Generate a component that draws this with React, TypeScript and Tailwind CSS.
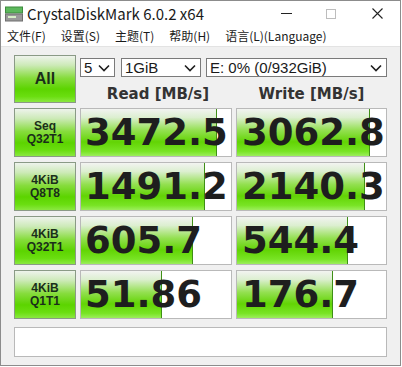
import React from 'react';

const rows = [
  { l1: 'Seq', l2: 'Q32T1', read: '3472.5', rp: 90.5, write: '3062.8', wp: 89 },
  { l1: '4KiB', l2: 'Q8T8', read: '1491.2', rp: 82.7, write: '2140.3', wp: 86 },
  { l1: '4KiB', l2: 'Q32T1', read: '605.7', rp: 74.7, write: '544.4', wp: 74.5 },
  { l1: '4KiB', l2: 'Q1T1', read: '51.86', rp: 54, write: '176.7', wp: 64.4 },
];

const menus = ['文件(F)', '设置(S)', '主题(T)', '帮助(H)', '语言(L)(Language)'];

function Chevron() {
  return (
    <svg width="12" height="8" viewBox="0 0 12 8" className="shrink-0">
      <polyline points="1,1.5 6,6.5 11,1.5" fill="none" stroke="#1f1f1f" strokeWidth="1.6" />
    </svg>
  );
}

function Select({ value, className }: { value: string; className: string }) {
  return (
    <div
      className={`h-[19px] bg-white border border-[#7a7a7a] flex items-center justify-between pl-[3px] pr-[4px] text-[15px] text-[#1a1a1a] font-['Liberation_Sans',sans-serif] ${className}`}
    >
      <span className="leading-none">{value}</span>
      <Chevron />
    </div>
  );
}

function Result({ value, pct, pad }: { value: string; pct: number; pad: string }) {
  return (
    <div className="relative h-[49px] bg-white border border-[#b9b9b9] overflow-hidden">
      <div
        className="absolute left-0 top-0 bottom-0 border-r border-[#3f8f16] bg-[linear-gradient(to_bottom,#f2f3f1_0%,#dcefd0_18%,#94e052_45%,#62d404_70%,#78e424_90%,#9cee5c_100%)]"
        style={{ width: `${pct}%` }}
      />
      <div
        className={`relative h-full flex items-center ${pad} text-[37px] leading-none font-bold text-[#1e1e1e] font-['DejaVu_Sans',sans-serif]`}
      >
        {value}
      </div>
    </div>
  );
}

function GreenButton({ children, h }: { children: React.ReactNode; h: string }) {
  return (
    <div
      className={`${h} border border-[#8a9a86] bg-[linear-gradient(to_bottom,#eef3ec_0%,#cdeab8_20%,#86dc3c_48%,#5cd400_72%,#6ade10_88%,#8ae840_100%)] flex flex-col items-center justify-center`}
    >
      {children}
    </div>
  );
}

export default function App() {
  return (
    <div className="w-[402px] h-[367px] bg-white">
      <div className="w-[401px] h-[366px] border border-[#8c8c8c] flex flex-col bg-white">
        <div className="h-[25px] flex items-center shrink-0">
          <svg width="18" height="16" viewBox="0 0 18 16" className="ml-[4px] mr-[4px]">
            <rect x="0.5" y="1" width="17" height="6" fill="#5cb85c" stroke="#3d8b3d" />
            <rect x="0.5" y="8" width="17" height="7" fill="#9a9a9a" stroke="#6e6e6e" />
            <rect x="3" y="10" width="8" height="2" fill="#d8f0c8" />
          </svg>
          <span className="text-[15px] text-[#1a1a1a] font-['Noto_Sans_CJK_SC',sans-serif] leading-none">
            CrystalDiskMark 6.0.2 x64
          </span>
          <div className="flex-1" />
          <div className="w-[11px] h-[1px] bg-[#222] mr-[34px]" />
          <div className="w-[10px] h-[10px] border border-[#bdbdbd] mr-[36px]" />
          <svg width="11" height="11" viewBox="0 0 11 11" className="mr-[17px]">
            <path d="M0.5 0.5 L10.5 10.5 M10.5 0.5 L0.5 10.5" stroke="#222" strokeWidth="1.1" />
          </svg>
        </div>
        <div className="h-[20px] flex items-center gap-[15px] pl-[6px] text-[12px] text-[#1a1a1a] font-['Noto_Sans_CJK_SC',sans-serif] shrink-0">
          {menus.map(m => (
            <span key={m} className="leading-none">{m}</span>
          ))}
        </div>
        <div className="flex-1 bg-[#f0f0f0] border-t border-[#e3e3e3] pl-[13px] pt-[8px]">
          <div className="grid grid-cols-[62px_152px_151px] gap-x-[4px] gap-y-[5px]">
            <GreenButton h="h-[48px]">
              <span className="text-[16px] font-bold text-[#1a2e1a] font-['Liberation_Sans',sans-serif] leading-none">All</span>
            </GreenButton>
            <div className="col-span-2 h-[48px] flex flex-col">
              <div className="flex mt-[3px]">
                <Select value="5" className="w-[35px]" />
                <Select value="1GiB" className="w-[80px] ml-[6px]" />
                <Select value="E: 0% (0/932GiB)" className="w-[181px] ml-[5px]" />
              </div>
              <div className="flex mt-[10px] text-[15px] font-bold text-[#333] font-['DejaVu_Sans',sans-serif] leading-none">
                <span className="w-[156px] text-center">Read [MB/s]</span>
                <span className="w-[151px] text-center">Write [MB/s]</span>
              </div>
            </div>
            {rows.map((r, i) => (
              <React.Fragment key={i}>
                <GreenButton h="h-[49px]">
                  <span className="text-[12px] font-bold text-[#1a2e1a] font-['Liberation_Sans',sans-serif] leading-[13px]">{r.l1}</span>
                  <span className="text-[12px] font-bold text-[#1a2e1a] font-['Liberation_Sans',sans-serif] leading-[13px]">{r.l2}</span>
                </GreenButton>
                <Result value={r.read} pct={r.rp} pad="pl-[4px]" />
                <Result value={r.write} pct={r.wp} pad="pl-[5px]" />
              </React.Fragment>
            ))}
            <div className="col-span-3 mt-[3px] h-[30px] bg-white border border-[#b9b9b9]" />
          </div>
        </div>
      </div>
    </div>
  );
}
